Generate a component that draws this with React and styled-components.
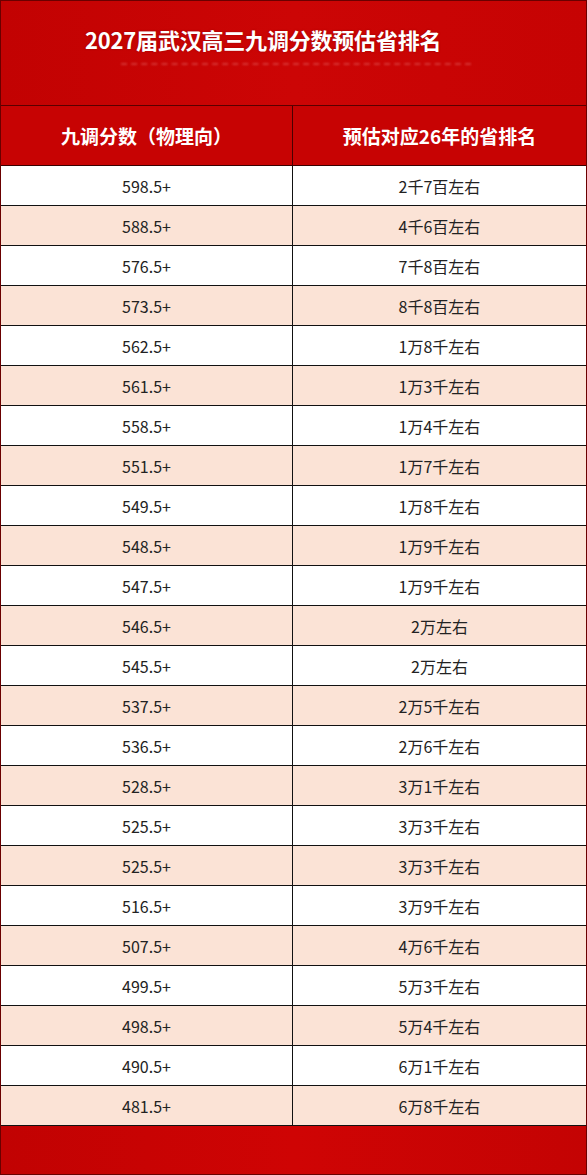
import React from 'react'
import styled, { createGlobalStyle } from 'styled-components'

const GlobalStyle = createGlobalStyle`
    html, body {
        margin: 0;
        padding: 0;
        background: #ffffff;
    }
    body {
        font-family: "Noto Sans CJK SC", "Noto Sans", sans-serif;
    }
`

const Page = styled.div`
    width: 587px;
    height: 1175px;
    display: flex;
    flex-direction: column;
    background: #c70303;
    box-sizing: border-box;
    border: 1px solid #6a0000;
    overflow: hidden;
`

const TitleBand = styled.div`
    height: 105px;
    flex-shrink: 0;
    display: flex;
    flex-direction: column;
    padding-left: 84px;
    box-sizing: border-box;
    background: linear-gradient(90deg, #c20202 0%, #cc0505 50%, #c60303 100%);
    border-bottom: 1px solid #5a0000;

    .title {
        margin-top: 20px;
        color: #ffffff;
        font-size: 22px;
        font-weight: 700;
        line-height: 36px;
        letter-spacing: -0.2px;
        text-shadow: 0 0 2px rgba(120, 0, 0, 0.6);
    }

    .subtitle {
        margin-top: 6px;
        margin-left: 36px;
        width: 350px;
        height: 3px;
        border-top: 2px dashed rgba(255, 200, 200, 0.25);
        filter: blur(0.8px);
    }
`

const Row = styled.div`
    display: grid;
    grid-template-columns: 292px 1fr;
    flex-shrink: 0;
    height: ${p => (p.$head ? '60px' : '40px')};
    box-sizing: border-box;
    border-bottom: 1px solid ${p => (p.$head ? '#3a0000' : '#111111')};
    background: ${p => (p.$head ? '#c70303' : p.$shade ? '#fbe3d6' : '#ffffff')};
`

const Cell = styled.div`
    display: flex;
    align-items: center;
    justify-content: center;
    border-right: ${p => (p.$first ? '1px solid' : 'none')};
    border-color: ${p => (p.$head ? '#4a0000' : '#111111')};
    color: ${p => (p.$head ? '#ffffff' : '#222222')};
    font-size: ${p => (p.$head ? '19px' : '16px')};
    font-weight: ${p => (p.$head ? 700 : 400)};
`

const Footer = styled.div`
    flex: 1;
    background: linear-gradient(90deg, #c10202 0%, #cf0404 50%, #c40303 100%);
`

const data = [
    ['598.5+', '2千7百左右'],
    ['588.5+', '4千6百左右'],
    ['576.5+', '7千8百左右'],
    ['573.5+', '8千8百左右'],
    ['562.5+', '1万8千左右'],
    ['561.5+', '1万3千左右'],
    ['558.5+', '1万4千左右'],
    ['551.5+', '1万7千左右'],
    ['549.5+', '1万8千左右'],
    ['548.5+', '1万9千左右'],
    ['547.5+', '1万9千左右'],
    ['546.5+', '2万左右'],
    ['545.5+', '2万左右'],
    ['537.5+', '2万5千左右'],
    ['536.5+', '2万6千左右'],
    ['528.5+', '3万1千左右'],
    ['525.5+', '3万3千左右'],
    ['525.5+', '3万3千左右'],
    ['516.5+', '3万9千左右'],
    ['507.5+', '4万6千左右'],
    ['499.5+', '5万3千左右'],
    ['498.5+', '5万4千左右'],
    ['490.5+', '6万1千左右'],
    ['481.5+', '6万8千左右'],
]

export default function App() {
    return (
        <Page>
            <GlobalStyle />
            <TitleBand>
                <div className="title">2027届武汉高三九调分数预估省排名</div>
                <div className="subtitle" />
            </TitleBand>
            <Row $head>
                <Cell $head $first>九调分数（物理向）</Cell>
                <Cell $head>预估对应26年的省排名</Cell>
            </Row>
            {data.map(([score, rank], i) => (
                <Row key={i} $shade={i % 2 === 1}>
                    <Cell $first>{score}</Cell>
                    <Cell>{rank}</Cell>
                </Row>
            ))}
            <Footer />
        </Page>
    )
}
